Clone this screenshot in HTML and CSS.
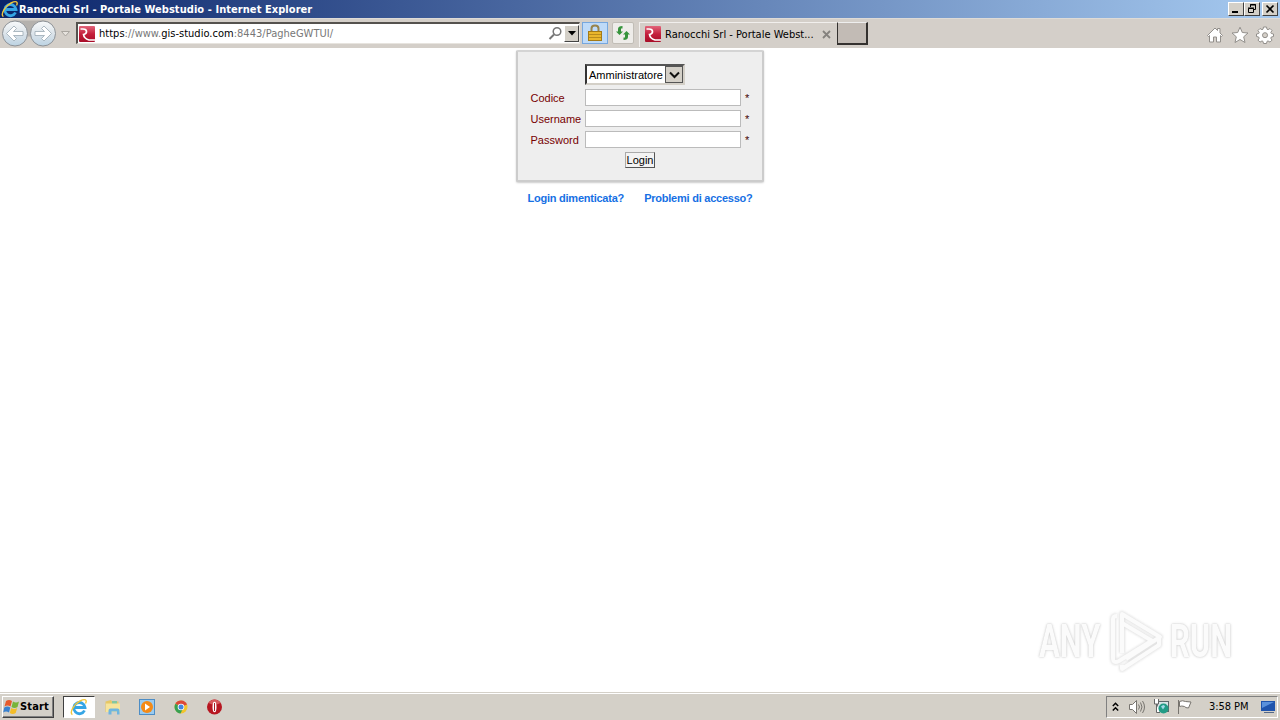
FILE: index.html
```html
<!DOCTYPE html>
<html lang="it">
<head>
  <meta charset="UTF-8">
  <meta name="viewport" content="width=device-width, initial-scale=1.0">
  <title>Ranocchi Srl - Portale Webstudio</title>
  <link rel="stylesheet" href="styles.css">
</head>
<body>
  <!-- Shared icons -->
  <svg class="defs" width="0" height="0">
    <defs>
      <linearGradient id="round" x1="0" y1="0" x2="0" y2="1">
        <stop offset="0" stop-color="#f8fafb"/>
        <stop offset=".5" stop-color="#dce4ea"/>
        <stop offset="1" stop-color="#bcd3e3"/>
      </linearGradient>
      <linearGradient id="red" x1="0" y1="0" x2="0" y2="1">
        <stop offset="0" stop-color="#e2657a"/>
        <stop offset=".5" stop-color="#c41f3c"/>
        <stop offset="1" stop-color="#a80d28"/>
      </linearGradient>
      <symbol id="ie" viewBox="0 0 18 18">
        <path d="M14.500 12.500A5.600 5.600 0 1 1 15 9.500H5" fill="none" stroke="#35a5e5" stroke-width="2.800"/>
        <path d="M2.400 16.600C-.8 14.500 4 6 10 3c5-2.500 7.500-1.500 5.500 2.500" fill="none" stroke="#f0c63c" stroke-width="1.400"/>
      </symbol>
      <symbol id="ranocchi" viewBox="0 0 16 16">
        <rect width="16" height="16" rx="1" fill="url(#red)"/>
        <path d="M1.500 3H4q3.500 0 3.500 2.500T4.500 8.500q.5 4 5.500 5.500h6" fill="none" stroke="#fff" stroke-width="1.700"/>
      </symbol>
    </defs>
  </svg>

  <!-- Title Bar -->
  <header class="title-bar">
    <svg class="title-icon" width="18" height="18"><use href="#ie"/></svg>
    <span class="title-text">Ranocchi Srl - Portale Webstudio - Internet Explorer</span>
    <div class="window-buttons">
      <button class="win-btn"><svg width="12" height="10"><path d="M2 7h6v2H2z"/></svg></button>
      <button class="win-btn"><svg width="12" height="10" fill="none" stroke="#000"><path d="M4.500 3V.5h5v5H8M4 1h6M2.500 4.500h5v4h-5zM2 4h6"/></svg></button>
      <button class="win-btn close"><svg width="12" height="10"><path d="M2.500 1.500l7 7M9.500 1.500l-7 7" stroke="#000" stroke-width="1.700"/></svg></button>
    </div>
  </header>

  <!-- Browser Toolbar -->
  <div class="toolbar">
    <svg class="nav-buttons" width="72" height="30">
      <path d="M15 1.500h28q6 0 10 5-6 8-5 11H12Q2 1.500 15 1.500z" fill="#b4b1ad"/>
      <circle cx="15" cy="14.500" r="12.500" fill="url(#round)" stroke="#8d9297"/>
      <circle cx="43" cy="14.500" r="12.500" fill="url(#round)" stroke="#8d9297"/>
      <g fill="#fff" stroke="#9ba9b4" stroke-width=".8">
        <path d="M6.500 14.500l7.500-7.500 2.500 2.500-3 3H23v4h-9.500l3 3-2.500 2.500z"/>
        <path d="M51.500 14.500L44 7l-2.500 2.500 3 3H35v4h9.500l-3 3L44 22z"/>
      </g>
      <path d="M61.500 12.500h8l-4 4.500z" fill="#e7e3de" stroke="#aaa6a0"/>
    </svg>
    <div class="address-bar">
      <svg width="16" height="16"><use href="#ranocchi"/></svg>
      <span class="url"><b>https</b>://www.<b>gis-studio.com</b>:8443/PagheGWTUI/</span>
      <svg class="search" width="15" height="15" fill="none" stroke="#777"><circle cx="9" cy="5.500" r="3.800" stroke-width="1.500"/><path d="M6 8.500L1.500 13" stroke-width="2"/></svg>
      <button class="drop"><svg width="8" height="5"><path d="M0 0h8L4 4.500z"/></svg></button>
    </div>
    <div class="lock">
      <svg width="16" height="18"><path d="M4.500 9V4.500q0-3 3.500-3t3.500 3V9" fill="none" stroke="#98834a" stroke-width="2"/><rect x="1.500" y="7.500" width="13" height="9" fill="#e9b62c" stroke="#a37a16"/><path d="M2 10.500h12M2 13.500h12" stroke="#b98b1c"/></svg>
    </div>
    <div class="refresh">
      <svg width="16" height="16" fill="#36943c"><path d="M7.500 1v2.500H6v3h2L4.500 10 1 6.500h2V4q0-3 4.500-3z"/><path d="M8.500 15v-2.500H10v-3H8L11.500 6 15 9.500h-2V12q0 3-4.500 3z"/></svg>
    </div>
    <div class="tab">
      <svg width="16" height="16"><use href="#ranocchi"/></svg>
      <span class="tab-title">Ranocchi Srl - Portale Webst...</span>
      <svg class="tab-close" width="9" height="9"><path d="M1 1l7 7M8 1L1 8" stroke="#85827e" stroke-width="1.800"/></svg>
    </div>
    <div class="new-tab"></div>
    <div class="tools">
      <svg width="18" height="18" fill="#fff" stroke="#928f8b"><path d="M1.500 9.500L9 2l2.500 2.500V2.500h2.500V7l2.500 2.500-1 1-1-1v6.500h-4V11h-3v5h-4V9.500l-1 1z"/></svg>
      <svg width="18" height="18" fill="#fff" stroke="#928f8b"><path d="M9 1.200l2.300 5.300 5.700.5-4.300 3.800 1.300 5.700-5-3-5 3 1.300-5.700L1 7l5.700-.5z"/></svg>
      <svg width="18" height="18" fill="#fff" stroke="#928f8b"><path d="M7.500 1h3l.5 2.200 1 .5 2-1.200 2 2-1.200 2 .5 1 2.200.5v2.500l-2.200.5-.5 1.200 1.200 1.900-2 2-2-1.200-1 .5-.5 2.100h-3L7 15.400l-1-.5-2 1.200-2-2 1.200-1.900-.5-1.200L.5 10.500V8l2.200-.5.5-1L2 4.500l2-2 2 1.200 1-.5z"/><circle cx="9" cy="9.200" r="2.500" fill="#d5d0c9"/></svg>
    </div>
  </div>

  <!-- Login Page -->
  <main class="page">
    <form class="login-box">
      <div class="row first">
        <span class="label"></span>
        <div class="select"><span>Amministratore</span><i><svg width="11" height="8"><path d="M1 1.500l4.500 4.500L10 1.500" fill="none" stroke="#111" stroke-width="2"/></svg></i></div>
      </div>
      <div class="row"><label class="label" for="codice">Codice</label><input id="codice" type="text"><span class="star">*</span></div>
      <div class="row"><label class="label" for="username">Username</label><input id="username" type="text"><span class="star">*</span></div>
      <div class="row"><label class="label" for="password">Password</label><input id="password" type="password"><span class="star">*</span></div>
      <button class="login-btn" type="button">Login</button>
    </form>
    <div class="links">
      <a class="forgot">Login dimenticata?</a>
      <a class="problems">Problemi di accesso?</a>
    </div>

    <!-- Watermark -->
    <div class="watermark">
      <span class="any">ANY</span>
      <svg width="60" height="64" fill="none" stroke-linejoin="round">
        <g class="logo-edge"><path id="play" d="M15 44V5l38 23-34 22M6 49V10q0-3 4-3M6 49q0 6 6 3l34-21M15 56v4l37-24v-8M15 5v9l32 19"/></g>
        <g class="logo-fill"><use href="#play"/></g>
      </svg>
      <span class="run">RUN</span>
    </div>
  </main>

  <!-- Taskbar -->
  <footer class="taskbar">
    <button class="start">
      <svg width="17" height="16"><path d="M3 2q3-2 6 0L7.500 7.500q-3-2-6 0z" fill="#e65a2c"/><path d="M10 2.500q3 2 6 0L14.500 8q-3 2-6 0z" fill="#78b43a"/><path d="M1.300 8.500q3-2 6 0L6 13.500q-3-2-5.800 0z" fill="#3981cf"/><path d="M8.200 9q3 2 6 0l-1.500 5q-3 2-5.900 0z" fill="#f4bd28"/></svg>
      <span>Start</span>
    </button>
    <div class="task-active"><svg width="18" height="18"><use href="#ie"/></svg></div>
    <div class="quick">
      <svg width="18" height="18"><path d="M1.500 3.500L7 2l1 1.500h6.500V14h-13z" fill="#e6c766"/><path d="M8 3h5v3H8z" fill="#84c7a0"/><path d="M2 5.500h14V14H2z" fill="#f7e49b"/><path d="M4.500 16.500v-4q0-2 2-2h7q2 0 2 2v4H13v-3H7.500v3z" fill="#6fb5df"/></svg>
      <svg width="18" height="18"><rect x="1.500" y="1.500" width="15" height="15" fill="#9acbf0" stroke="#4d8dc5"/><circle cx="9" cy="9" r="6" fill="#f48a16"/><path d="M7 5.500l5 3.500-5 3.500z" fill="#fff"/></svg>
      <svg width="18" height="18"><circle cx="9" cy="9" r="6.500" fill="#f2c52d"/><path d="M9 9L3.400 5.700A6.500 6.500 0 0 1 15 6.500L9 9z" fill="#dc4838"/><path d="M9 9L3.400 5.700A6.500 6.500 0 0 0 8.500 15.500l2.500-5z" fill="#38a052"/><circle cx="9" cy="9" r="3.300" fill="#fff"/><circle cx="9" cy="9" r="2.500" fill="#4285df"/></svg>
      <svg width="18" height="18"><circle cx="8.500" cy="9" r="7.500" fill="#b71620"/><path d="M2.500 5a7 7 0 0 1 12 0q-6 3-12 0z" fill="#d75a5c"/><ellipse cx="8.500" cy="9" rx="2" ry="5.300" fill="#fff"/><path d="M8.500 5v8" stroke="#a91b24"/></svg>
    </div>
    <div class="tray">
      <svg class="chevrons" width="7" height="10" fill="none" stroke="#000" stroke-width="1.500"><path d="M.8 4l2.700-2.700L6.200 4M.8 8.500l2.700-2.700 2.700 2.700"/></svg>
      <svg class="sound" width="18" height="16" fill="none" stroke="#77746f"><path d="M1.500 5.500h3l4-4v13l-4-4h-3z" fill="#fff"/><path d="M10.500 5.500q2 2.500 0 5M12.500 3.500q3 4.500 0 9M14.500 2q4 6 0 12"/></svg>
      <svg class="network" width="17" height="17"><rect x="4.500" y="3.500" width="11" height="10" fill="#d9e5e8" stroke="#5d686b"/><path d="M1.500 1v5h4V1M3.500 6v8.500H7" stroke="#666" fill="#fff"/><circle cx="10.500" cy="10.500" r="5" fill="#229c86"/><path d="M8 8.500q3-3 4 0l-2 3z" fill="#a0d8e8"/></svg>
      <svg class="flag" width="17" height="16" fill="#fff" stroke="#77746f"><path d="M2.500 1v14M3.500 2.500q3-1.500 6 0l5.500.5-2.500 6q-3 0-4-1.500-3-1-5 0z"/></svg>
      <span class="clock">3:58 PM</span>
      <svg class="desktop" width="16" height="14"><path d="M1 1h14v10H1z" fill="#1f54ad"/><path d="M2 2h12L2 8z" fill="#5a91dc"/><path d="M4 12h10v1H4z" fill="#536888"/></svg>
    </div>
  </footer>
</body>
</html>
```
FILE: styles.css
```css
/* General Reset */
* {
  box-sizing: border-box;
}

body {
  display: flex;
  flex-direction: column;
  width: 1280px;
  height: 720px;
  margin: 0;
  overflow: hidden;
  background-color: #fff;
  font-family: "DejaVu Sans Condensed", "DejaVu Sans", sans-serif;
  font-size: 11px;
  color: #000;
}

svg {
  display: block;
  flex: none;
}

.defs {
  position: absolute;
}

button {
  padding: 0;
  color: #000;
  font-family: inherit;
}

span {
  white-space: nowrap;
}

/* Title Bar */
.title-bar {
  display: flex;
  align-items: center;
  height: 18px;
  flex: none;
  padding: 0 2px 0 1px;
  background: linear-gradient(to right, #0a246a, #a6caf0);
}

.title-text {
  color: #fff;
  font-weight: bold;
  letter-spacing: 0.06px;
}

.window-buttons {
  display: flex;
  margin-left: auto;
}

.win-btn {
  display: flex;
  align-items: center;
  justify-content: center;
  width: 16px;
  height: 14px;
  background-color: #d4d0c8;
  border: 1px solid;
  border-color: #fff #404040 #404040 #fff;
}

.close {
  margin-left: 2px;
}

/* Browser Toolbar */
.toolbar {
  display: flex;
  height: 30px;
  flex: none;
  background-color: #d4cfc9;
  border-top: 1px solid #dedbd7;
}

.nav-buttons {
  margin-right: 4px;
}

.address-bar {
  display: flex;
  align-items: center;
  width: 504px;
  height: 22px;
  margin-top: 3px;
  padding: 0 0 0 1px;
  background-color: #fff;
  border: 1px solid;
  border-width: 2px 1px 1px 2px;
  border-color: #55524e #e7e4df #e7e4df #55524e;
}

.url {
  margin-left: 4px;
  color: #777;
  letter-spacing: 0.02px;
}

.url b {
  color: #000;
  font-weight: normal;
}

.search {
  margin-left: auto;
}

.drop {
  display: flex;
  align-items: center;
  justify-content: center;
  width: 15px;
  height: 17px;
  margin-left: 1px;
  background-color: #d4d0c8;
  border: 1px solid;
  border-color: #fff #444 #444 #fff;
}

.lock {
  display: flex;
  align-items: center;
  justify-content: center;
  width: 26px;
  height: 22px;
  margin: 3px 0 0 2px;
  background-color: #bedaf8;
  border: 1px solid #76a7de;
}

.refresh {
  display: flex;
  align-items: center;
  justify-content: center;
  width: 22px;
  height: 22px;
  margin: 3px 0 0 4px;
  background-color: #eeece9;
  border: 1px solid #c1bdb6;
  border-radius: 2px;
}

.tab {
  display: flex;
  align-items: center;
  width: 198px;
  height: 25px;
  margin: 3px 0 0 5px;
  padding: 0 6px 2px 5px;
  border: 1px solid #f1efed;
  border-width: 1px 0 0 1px;
}

.tab-title {
  margin-left: 4px;
}

.tab-close {
  margin-left: auto;
}

.new-tab {
  width: 31px;
  height: 23px;
  margin-top: 3px;
  background-color: #c2bbb5;
  border: 1px solid;
  border-width: 1px 2px 2px 1px;
  border-color: #eee #34312f #34312f #34312f;
}

.tools {
  display: flex;
  gap: 7px;
  margin: 7px 6px 0 auto;
}

/* Login Page */
.page {
  display: flex;
  flex-direction: column;
  align-items: center;
  flex: 1;
  padding-top: 2px;
  font-family: "Liberation Sans", Arial, sans-serif;
}

.login-box {
  display: flex;
  flex-direction: column;
  width: 248px;
  height: 132px;
  padding: 12px;
  background-color: #eee;
  border: 2px solid #ccc;
  border-top-color: #d4d4d4;
  border-radius: 2px;
  box-shadow: 0 1px 2px #ccc;
}

.row {
  display: flex;
  align-items: center;
  height: 21px;
}

.first {
  height: 23px;
  align-items: flex-start;
}

.label {
  width: 55px;
  padding-left: 0.5px;
  color: #700;
}

.row input {
  width: 156px;
  height: 17px;
  padding: 0;
  background-color: #fff;
  border: 1px solid #bbb;
  border-radius: 0;
}

.star {
  margin-left: 4px;
  color: #400;
}

.select {
  display: flex;
  align-items: center;
  width: 100px;
  height: 21px;
  padding-left: 2px;
  background-color: #fff;
  border: 2px solid;
  border-color: #555 #d4d0c8 #d4d0c8 #333;
}

.select i {
  display: flex;
  align-items: center;
  justify-content: center;
  width: 18px;
  height: 17px;
  margin-left: auto;
  background-color: #d4d0c8;
  border: 1px solid #555;
}

.login-btn {
  width: 30px;
  height: 16px;
  margin: 2px 0 0 95px;
  background-color: #f3f3f3;
  border: 1px solid;
  border-color: #aaa #555 #555 #aaa;
  font-size: 11px;
  line-height: 14px;
}

.links {
  display: flex;
  justify-content: space-between;
  width: 225px;
  margin-top: 10px;
  line-height: 13px;
  color: #1670e4;
  font-weight: bold;
  letter-spacing: -0.24px;
}

/* Watermark */
.watermark {
  display: flex;
  align-items: center;
  align-self: flex-end;
  width: 198px;
  margin: auto 43px 19px 0;
  color: #fbfbfb;
  font-family: Roboto, sans-serif;
  font-size: 47px;
  font-weight: bold;
  line-height: 64px;
  text-shadow: 0 0 2px #c4c4c4, 0 0 4px #ddd;
  opacity: 0.99;
}

.any,
.run {
  width: 66px;
  transform: scaleX(0.66);
  transform-origin: left;
}

.watermark svg {
  margin-left: 2px;
  margin-right: 3px;
}

.logo-edge {
  stroke: #e2e2e2;
  stroke-width: 6px;
  filter: blur(0.8px);
}

.logo-fill {
  stroke: #fbfbfb;
  stroke-width: 4px;
}

/* Taskbar */
.taskbar {
  display: flex;
  align-items: center;
  height: 28px;
  flex: none;
  padding: 2px;
  background-color: #d4d0c8;
  border-top: 1px solid #d4d0c8;
  box-shadow: inset 0 1px #fff;
}

.start {
  display: flex;
  align-items: center;
  width: 52px;
  height: 22px;
  background-color: #d4d0c8;
  border: 1px solid;
  border-color: #fff #404040 #404040 #fff;
  box-shadow: inset -1px -1px #808080;
  font-size: 11px;
  font-weight: bold;
}

.start span {
  letter-spacing: 0.15px;
}

.task-active {
  display: flex;
  align-items: center;
  justify-content: center;
  width: 32px;
  height: 22px;
  margin-left: 9px;
  background-color: #fff;
  border: 1px solid;
  border-color: #404040 #fff #fff #404040;
}

.quick {
  display: flex;
  gap: 16px;
  margin-left: 9px;
}

.tray {
  display: flex;
  align-items: center;
  width: 172px;
  height: 22px;
  margin-left: auto;
  padding-left: 5px;
  border: 1px solid;
  border-color: #808080 #fff #fff #808080;
}

.sound {
  margin-left: 9px;
}

.network {
  margin-left: 7px;
}

.flag {
  margin-left: 6px;
}

.clock {
  margin-left: 16px;
  letter-spacing: -0.05px;
}

.desktop {
  margin-left: auto;
  margin-right: 1px;
}
```
